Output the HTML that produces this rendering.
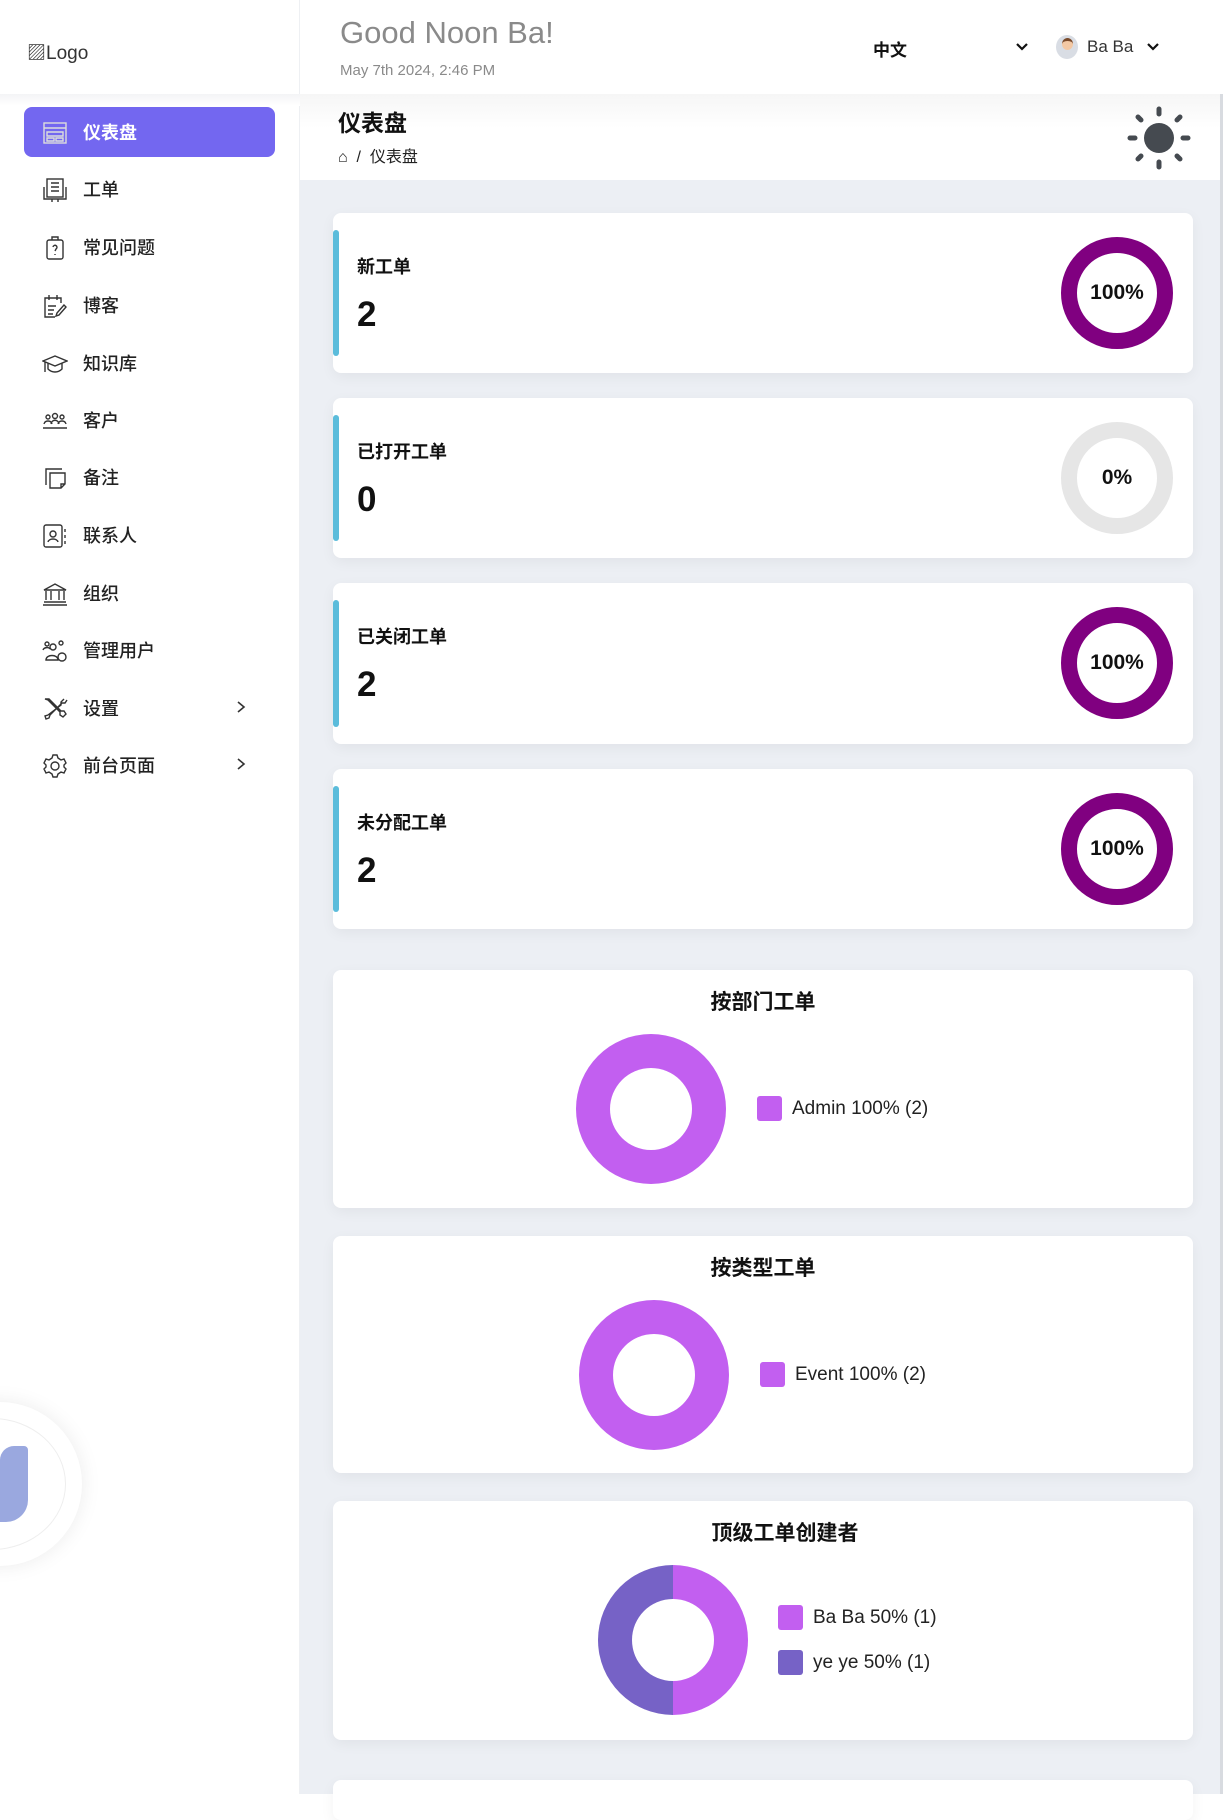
<!DOCTYPE html>
<html><head><meta charset="utf-8"><style>
*{box-sizing:border-box;margin:0;padding:0}
body{width:1223px;height:1794px;overflow:hidden;background:#fff;font-family:"Liberation Sans","Noto Sans CJK SC",sans-serif;position:relative;color:#111}
.sb{position:absolute;left:0;top:0;width:300px;height:1794px;background:#fff;border-right:1px solid #eef0f3}
.logo{position:absolute;left:27px;top:38px;font-size:19px;color:#333}
.sbtop{position:absolute;left:0;top:94px;width:300px;height:12px;background:linear-gradient(#f3f4f6,#fff)}
.nav{position:absolute;left:24px;width:251px;height:50px;display:flex;align-items:center;font-size:18px;color:#222;font-weight:500}
.nav svg{position:absolute;left:18px;top:13px;width:26px;height:26px;fill:none;stroke:#333;stroke-width:1.4}
.nav span{position:absolute;left:59px}
.nav.act{background:#7367f0;border-radius:8px;color:#fff;font-weight:bold}
.nav.act svg{stroke:#ddd}
.nav .chev{position:absolute;left:210px;top:17px;width:14px;height:14px;stroke-width:1.6}
.hdr{position:absolute;left:300px;top:0;width:923px;height:94px;background:#fff}
.g{position:absolute;left:340px;top:15px;font-size:31px;color:#8a8a8a}
.d{position:absolute;left:340px;top:62px;font-size:15px;color:#8a8a8a}
.main{position:absolute;left:300px;top:94px;width:921px;height:1700px;background:#eceff4}
.ph{position:absolute;left:300px;top:94px;width:921px;height:86px;background:linear-gradient(#f6f6f6,#fff 40%)}
.rb{position:absolute;left:1220px;top:94px;width:3px;height:1700px;background:#d8dbe0}
.card{position:absolute;left:333px;width:860px;background:#fff;border-radius:8px;box-shadow:0 4px 14px rgba(0,0,0,.05)}
.bar{position:absolute;left:0;top:17px;bottom:17px;width:6px;background:#5bbcdb;border-radius:3px}
.lab{position:absolute;left:24px;top:40px;font-size:18px;font-weight:bold}
.num{position:absolute;left:24px;top:82px;font-size:35px;font-weight:bold}
.dn{position:absolute;left:728px;top:24px;width:112px;height:112px;border-radius:50%;border:16px solid #800080;display:flex;align-items:center;justify-content:center;font-weight:bold;font-size:21px}
.ct{position:absolute;left:0;width:100%;text-align:center;font-size:21px;font-weight:bold;top:16px}
.pie{position:absolute;width:150px;height:150px;border-radius:50%}
.pie:after{content:"";position:absolute;left:34px;top:34px;width:82px;height:82px;border-radius:50%;background:#fff}
.lg{position:absolute;font-size:19px;color:#222;display:flex;align-items:center}
.lg i{display:inline-block;width:25px;height:25px;border-radius:3px;margin-right:10px}
</style></head><body>
<div class="main"></div><div class="ph"></div><div class="rb"></div>
<div class="sb">
<div class="logo">▨Logo</div><div class="sbtop"></div>
<div class="nav act" style="top:107px"><svg viewBox="0 0 26 26"><rect x="2" y="3" width="22" height="20"/><path d="M2 8h22M5 12h16v4H5zM5 18h7v3H5zM14 18h7v3h-7z"/></svg><span>仪表盘</span></div>
<div class="nav" style="top:164px"><svg viewBox="0 0 26 26"><rect x="5" y="2" width="16" height="18"/><path d="M2 10v12h22V10M9 6h8M9 10h8M9 14h8M10 22v3M16 22v3"/></svg><span>工单</span></div>
<div class="nav" style="top:222px"><svg viewBox="0 0 26 26"><rect x="5" y="5" width="16" height="19" rx="2"/><path d="M10 5V2h6v3M11 12a2 2 0 1 1 3 2l-1 2M13 19v1"/></svg><span>常见问题</span></div>
<div class="nav" style="top:280px"><svg viewBox="0 0 26 26"><path d="M19 10V5H3v19h10M7 2v5M15 2v5M6 13h8M6 17h6M6 21h5M22 12l-7 8-1 3 3-1 7-8z"/></svg><span>博客</span></div>
<div class="nav" style="top:338px"><svg viewBox="0 0 26 26"><path d="M1 10l12-5 12 5-12 5zM6 12v6c4 4 10 4 14 0v-6M3 11v10"/></svg><span>知识库</span></div>
<div class="nav" style="top:395px"><svg viewBox="0 0 26 26"><circle cx="6" cy="9" r="2"/><circle cx="13" cy="8" r="2.5"/><circle cx="20" cy="9" r="2"/><path d="M2 16c1-4 7-4 8 0M9 16c1-5 7-5 8 0M16 16c1-4 7-4 8 0M1 20h24"/></svg><span>客户</span></div>
<div class="nav" style="top:452px"><svg viewBox="0 0 26 26"><path d="M4 20V4h16M8 8h15v11l-4 4H8zM23 19h-4v4"/></svg><span>备注</span></div>
<div class="nav" style="top:510px"><svg viewBox="0 0 26 26"><rect x="2" y="2" width="18" height="22" rx="2"/><circle cx="11" cy="11" r="3"/><path d="M6 19c1-4 9-4 10 0M23 6v3M23 12v3M23 18v3"/></svg><span>联系人</span></div>
<div class="nav" style="top:568px"><svg viewBox="0 0 26 26"><path d="M2 9L13 3l11 6zM4 10v9M9 10v9M17 10v9M22 10v9M2 21h22M1 24h24"/></svg><span>组织</span></div>
<div class="nav" style="top:625px"><svg viewBox="0 0 26 26"><circle cx="5" cy="6" r="2"/><circle cx="11" cy="9" r="3"/><circle cx="19" cy="5" r="2"/><path d="M1 12c1-3 6-3 7-1M4 22c0-6 12-6 12 0z"/><circle cx="20" cy="19" r="4"/></svg><span>管理用户</span></div>
<div class="nav" style="top:683px"><svg viewBox="0 0 26 26"><path d="M3 3l4 0 12 12 3 0 2 3-3 3-3-2v-3L6 4zM22 3l-3 3v3l-13 10-3 1 1 3 3-1 1-3 12-12h3l2-3"/></svg><span>设置</span><svg class="chev" viewBox="0 0 14 14"><path d="M4 2l6 5-6 5"/></svg></div>
<div class="nav" style="top:740px"><svg viewBox="0 0 26 26"><circle cx="13" cy="13" r="4"/><path d="M11 2h4l1 3 3 2 3-1 2 4-2 2v2l2 2-2 4-3-1-3 2-1 3h-4l-1-3-3-2-3 1-2-4 2-2v-2l-2-2 2-4 3 1 3-2z"/></svg><span>前台页面</span><svg class="chev" viewBox="0 0 14 14"><path d="M4 2l6 5-6 5"/></svg></div>
<div style="position:absolute;left:-82px;top:1402px;width:164px;height:164px;border-radius:50%;background:#fff;box-shadow:0 0 20px rgba(0,0,0,.08)"><div style="position:absolute;left:0;top:16px;width:148px;height:132px;border-radius:50%;border:1px solid #eee"></div><div style="position:absolute;left:82px;top:44px;width:28px;height:76px;background:#9aa8df;border-radius:14px 4px 22px 0"></div></div>
</div>
<div class="hdr"></div>
<div class="g">Good Noon Ba!</div><div class="d">May 7th 2024, 2:46 PM</div>
<div style="position:absolute;left:873px;top:36px;font-size:17px;font-weight:bold">中文</div>
<svg style="position:absolute;left:1014px;top:40px" width="16" height="14" viewBox="0 0 16 14" fill="none" stroke="#111" stroke-width="2.2"><path d="M3 4l5 5 5-5"/></svg>
<div style="position:absolute;left:1056px;top:35px;width:22px;height:24px;border-radius:50%;background:#d9dde4;overflow:hidden"><div style="position:absolute;left:6px;top:3px;width:11px;height:12px;border-radius:50%;background:#f3c8a4;border-top:3px solid #7a4a2a"></div></div>
<div style="position:absolute;left:1087px;top:37px;font-size:17px;color:#333">Ba Ba</div>
<svg style="position:absolute;left:1145px;top:40px" width="16" height="14" viewBox="0 0 16 14" fill="none" stroke="#111" stroke-width="2.2"><path d="M3 4l5 5 5-5"/></svg>
<div style="position:absolute;left:338px;top:104px;font-size:23px;font-weight:bold">仪表盘</div>
<div style="position:absolute;left:338px;top:143px;font-size:16px;color:#222">⌂&nbsp; /&nbsp; 仪表盘</div>
<svg style="position:absolute;left:1127px;top:106px" width="64" height="64" viewBox="0 0 64 64"><circle cx="32" cy="32" r="15" fill="#454a50"/><g stroke="#454a50" stroke-width="5" stroke-linecap="round"><path d="M32 3v5M32 56v5M3 32h5M56 32h5M11 11l3 3M50 50l3 3M53 11l-3 3M11 53l3-3"/></g></svg>

<div class="card" style="top:213px;height:160px"><div class="bar"></div><div class="lab">新工单</div><div class="num">2</div><div class="dn">100%</div></div>
<div class="card" style="top:398px;height:160px"><div class="bar"></div><div class="lab">已打开工单</div><div class="num">0</div><div class="dn" style="border-color:#e6e6e6">0%</div></div>
<div class="card" style="top:583px;height:161px"><div class="bar"></div><div class="lab">已关闭工单</div><div class="num">2</div><div class="dn">100%</div></div>
<div class="card" style="top:769px;height:160px"><div class="bar"></div><div class="lab">未分配工单</div><div class="num">2</div><div class="dn">100%</div></div>

<div class="card" style="top:970px;height:238px"><div class="ct">按部门工单</div><div class="pie" style="left:243px;top:64px;background:#c25ff0"></div><div class="lg" style="left:424px;top:126px"><i style="background:#c25ff0"></i>Admin 100% (2)</div></div>
<div class="card" style="top:1236px;height:237px"><div class="ct">按类型工单</div><div class="pie" style="left:246px;top:64px;background:#c25ff0"></div><div class="lg" style="left:427px;top:126px"><i style="background:#c25ff0"></i>Event 100% (2)</div></div>
<div class="card" style="top:1501px;height:239px"><div class="ct" style="left:22px">顶级工单创建者</div><div class="pie" style="left:265px;top:64px;background:linear-gradient(90deg,#7662c6 50%,#c25ff0 50%)"></div><div class="lg" style="left:445px;top:104px"><i style="background:#c25ff0"></i>Ba Ba 50% (1)</div><div class="lg" style="left:445px;top:149px"><i style="background:#7662c6"></i>ye ye 50% (1)</div></div>
<div class="card" style="top:1780px;height:40px"></div>
</body></html>
